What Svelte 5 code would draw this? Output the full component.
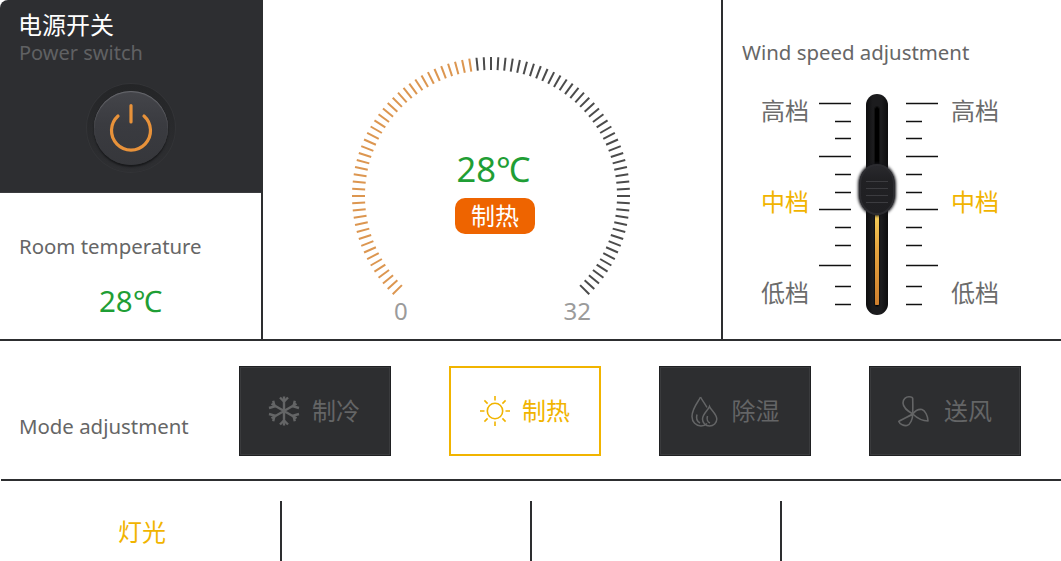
<script lang="ts">
  const cx = 140
  const cy = 140
  const ticks = Array.from({ length: 91 }, (_, i) => {
    const deg = -135 + i * 3
    const rad = (deg * Math.PI) / 180
    return {
      x1: cx + 126 * Math.sin(rad),
      y1: cy - 126 * Math.cos(rad),
      x2: cx + 139 * Math.sin(rad),
      y2: cy - 139 * Math.cos(rad),
      on: deg <= -9
    }
  })

  // y of each scale mark, relative to the top of the slider block
  const marks = [
    { y: 9.5, long: true },
    { y: 27.5, long: false },
    { y: 44.5, long: false },
    { y: 62.5, long: true },
    { y: 80.5, long: false },
    { y: 98.5, long: false },
    { y: 115.5, long: true },
    { y: 133.5, long: false },
    { y: 151.5, long: false },
    { y: 171.5, long: true },
    { y: 192.5, long: false },
    { y: 210.5, long: false }
  ]

  const levels = [
    { label: '高档', active: false },
    { label: '中档', active: true },
    { label: '低档', active: false }
  ]

  const modes = [
    { id: 'cool', label: '制冷' },
    { id: 'heat', label: '制热' },
    { id: 'dry', label: '除湿' },
    { id: 'fan', label: '送风' }
  ]
  const current = 'heat'
</script>

<div class="page">
  <div class="top">
    <div class="left">
      <div class="power">
        <div class="title">电源开关</div>
        <div class="sub">Power switch</div>
        <div class="ring">
          <div class="knob">
            <svg width="44" height="50" viewBox="0 0 44 50" fill="none" aria-hidden="true">
              <path
                d="M9 14A19.5 19.5 0 1 0 35 14M22 3.5V20"
                stroke="#e8923a"
                stroke-width="3.2"
                stroke-linecap="round"
              />
            </svg>
          </div>
        </div>
      </div>
      <div class="room">
        <div class="label">Room temperature</div>
        <div class="room-value">28℃</div>
      </div>
    </div>

    <div class="center">
      <div class="gauge">
        <svg width="280" height="280" viewBox="0 0 280 280" aria-hidden="true">
          {#each ticks as t}
            <line
              x1={t.x1}
              y1={t.y1}
              x2={t.x2}
              y2={t.y2}
              stroke={t.on ? '#dc9650' : '#4b4b4b'}
              stroke-width="2"
            />
          {/each}
        </svg>
        <div class="readout">
          <div class="temp">28℃</div>
          <div class="badge">制热</div>
        </div>
        <div class="ends">
          <span>0</span>
          <span>32</span>
        </div>
      </div>
    </div>

    <div class="right">
      <div class="label">Wind speed adjustment</div>
      <div class="wind">
        <div class="levels">
          {#each levels as l}
            <span class:active={l.active}>{l.label}</span>
          {/each}
        </div>
        <svg class="scale" width="32" height="221" viewBox="0 0 32 221" aria-hidden="true">
          {#each marks as m}
            <line x1={m.long ? 0 : 16} x2="32" y1={m.y} y2={m.y} stroke="#111" stroke-width="1.5" />
          {/each}
        </svg>
        <div class="track">
          <div class="slot"><div class="fill"></div></div>
          <div class="thumb">
            <i></i><i></i><i></i><i></i>
          </div>
        </div>
        <svg class="scale" width="32" height="221" viewBox="0 0 32 221" aria-hidden="true">
          {#each marks as m}
            <line x1="0" x2={m.long ? 32 : 16} y1={m.y} y2={m.y} stroke="#111" stroke-width="1.5" />
          {/each}
        </svg>
        <div class="levels">
          {#each levels as l}
            <span class:active={l.active}>{l.label}</span>
          {/each}
        </div>
      </div>
    </div>
  </div>

  <div class="modes">
    <div class="label mode-label">Mode adjustment</div>
    <div class="mode-list">
      {#each modes as m}
        <div class="mode {m.id}" class:on={m.id === current}>
          {#if m.id === 'cool'}
            <svg width="32" height="30" viewBox="0 0 32 30" fill="none" stroke="currentColor" stroke-width="2.4" aria-hidden="true">
              <path d="M16 0.5V29.5M3.5 7.8 28.5 22.2M3.5 22.2 28.5 7.8" />
              <path d="M12 1.5 16 5.5 20 1.5M12 28.5 16 24.5 20 28.5" />
              <path d="M1 12 6.6 10.4 5.2 4.8M26.8 25.2 25.4 19.6 31 18M1 18 6.6 19.6 5.2 25.2M26.8 4.8 25.4 10.4 31 12" />
            </svg>
          {:else if m.id === 'heat'}
            <svg width="30" height="30" viewBox="0 0 30 30" fill="none" stroke="currentColor" stroke-width="1.6" aria-hidden="true">
              <circle cx="15" cy="15" r="7.7" />
              <path d="M15 0V4.5M15 25.5V30M0 15H4.5M25.5 15H30M4.4 4.4 7.6 7.6M22.4 22.4 25.6 25.6M4.4 25.6 7.6 22.4M22.4 7.6 25.6 4.4" />
            </svg>
          {:else if m.id === 'dry'}
            <svg width="27" height="31" viewBox="0 0 27 31" fill="none" stroke="currentColor" stroke-width="1.5" aria-hidden="true">
              <path d="M9.5 1C8 5 1 12 1 20.5C1 26 5 30 10 30C12.5 30 14.5 29 16 27.5" />
              <path d="M9.5 1C11 4 14 8 16 11.5" />
              <path d="M18.5 10.5C17.5 13.5 11.5 18 11.5 23C11.5 27 14.5 30 18.5 30C22.5 30 25.8 27 25.8 23C25.8 18 19.5 13.5 18.5 10.5Z" />
              <path d="M6 18.5C5 22 6 25.5 9 27M16.5 20C15.5 23 16.5 26 19 27" />
            </svg>
          {:else}
            <svg width="31" height="31" viewBox="0 0 31 31" fill="none" stroke="currentColor" stroke-width="1.6" stroke-linejoin="round" aria-hidden="true">
              <path d="M14.7 18C10 15 5 12 5 7C5 3 8 0.8 11 0.8C13 0.8 14.7 1 14.7 2.5C14.9 8 14.9 13 14.7 18Z" />
              <path d="M14.7 18C17 15 21 13 24 13.5C27 14.5 30 20 30 25C25 25 19 22 14.7 18Z" />
              <path d="M14.7 18C10 21 4 23 0.8 25.5C2 28.5 6 30 9 29.5C12.5 28.5 14.7 23 14.7 18Z" />
            </svg>
          {/if}
          <span>{m.label}</span>
        </div>
      {/each}
    </div>
  </div>

  <div class="lights">
    <div class="light active">灯光</div>
    <div class="light"></div>
    <div class="light"></div>
    <div class="light"></div>
  </div>
</div>

<style>
  :global(body) {
    margin: 0;
    background: #fff;
  }

  .page {
    width: 1061px;
    height: 561px;
    overflow: hidden;
    font-family: 'Noto Sans', 'Noto Sans CJK SC', sans-serif;
    color: #666;
  }

  .top {
    display: flex;
    height: 341px;
    box-sizing: border-box;
    border-bottom: 2px solid #2d2e30;
  }

  .left {
    width: 263px;
    box-sizing: border-box;
    border-right: 2px solid #2d2e30;
  }

  .power {
    height: 193px;
    box-sizing: border-box;
    padding: 8px 19px 0;
    background: #2d2e31;
    border-bottom: 1px solid #3a3b3e;
    border-top-left-radius: 8px;
  }

  .title {
    font-size: 24px;
    line-height: 34px;
    color: #fff;
    margin-left: -1px;
  }

  .sub {
    font-size: 20px;
    line-height: 24px;
    margin-top: -1px;
    color: #606163;
  }

  .ring {
    width: 88px;
    height: 88px;
    margin: 19px auto 0;
    border-radius: 50%;
    background: linear-gradient(#242527, #2e2f32);
    box-shadow: 0 0 0 1px #333437;
    display: flex;
    align-items: center;
    justify-content: center;
  }

  .knob {
    width: 74px;
    height: 74px;
    border-radius: 50%;
    background: linear-gradient(#44454a 0%, #3a3b40 45%, #36373b 100%);
    box-shadow:
      inset 0 1px 1px #6a6b70,
      0 2px 2px #17181a;
    display: flex;
    align-items: center;
    justify-content: center;
  }

  .knob svg {
    margin-bottom: 2px;
  }

  .room {
    padding: 39px 19px 0;
  }

  .label {
    font-size: 20.4px;
    line-height: 28px;
    color: #666;
  }

  .room-value {
    margin-top: 20px;
    padding-left: 80px;
    font-size: 29.5px;
    line-height: 42px;
    color: #1f9e35;
  }

  .center {
    width: 460px;
    box-sizing: border-box;
    border-right: 2px solid #2d2e30;
    padding: 56px 0 0 88px;
  }

  .gauge {
    position: relative;
    width: 280px;
    height: 280px;
  }

  .gauge svg {
    display: block;
  }

  .readout {
    position: absolute;
    left: 7px;
    right: 0;
    top: 88px;
    display: flex;
    flex-direction: column;
    align-items: center;
  }

  .temp {
    font-size: 34.5px;
    line-height: 50px;
    color: #1f9e35;
    margin-left: -2px;
  }

  .badge {
    width: 80px;
    height: 36px;
    margin: 4px 0 0 1px;
    border-radius: 10px;
    background: #ee6400;
    color: #fff;
    font-size: 24px;
    line-height: 36px;
    text-align: center;
  }

  .ends {
    position: absolute;
    left: 43px;
    top: 238px;
    width: 197px;
    display: flex;
    justify-content: space-between;
    font-size: 24px;
    line-height: 34px;
    color: #9b9b9b;
  }

  .right {
    flex: 1;
    padding: 38px 0 0 19px;
  }

  .wind {
    display: flex;
    margin-top: 28px;
    padding-left: 19px;
    height: 221px;
  }

  .levels {
    width: 48px;
    height: 221px;
    display: flex;
    flex-direction: column;
    justify-content: space-between;
    padding: 0 0 5px;
    box-sizing: border-box;
    font-size: 24px;
    line-height: 34px;
    color: #6c6c6c;
  }

  .levels .active {
    color: #f1b400;
  }

  .wind .levels:first-child {
    margin-right: 10px;
  }

  .wind .levels:last-child {
    margin-left: 13px;
  }

  .scale {
    display: block;
    flex: none;
  }

  .track {
    position: relative;
    width: 22px;
    height: 221px;
    margin: 0 18px 0 15px;
    border-radius: 11px;
    background: linear-gradient(90deg, #0d0d0e 0%, #1c1c1e 30%, #1c1c1e 70%, #0d0d0e 100%);
  }

  .slot {
    position: absolute;
    left: 9px;
    top: 13px;
    width: 4px;
    height: 199px;
    background: #000;
    overflow: hidden;
    border-radius: 2px;
    outline: 1px solid #111;
  }

  .fill {
    position: absolute;
    left: 0;
    right: 0;
    top: 104px;
    bottom: 1px;
    background: linear-gradient(#f6d25c 0%, #e6a53f 40%, #cf7f2e 100%);
  }

  .thumb {
    position: absolute;
    left: -7px;
    top: 70px;
    width: 36px;
    height: 51px;
    box-sizing: border-box;
    padding-top: 17px;
    border-radius: 18px / 20px;
    background: linear-gradient(#2a2a2e 0%, #212124 30%, #1f1f22 100%);
    box-shadow:
      0 0 3px 1px #16161a,
      inset 0 0 0 2px #2c2c30;
    display: flex;
    flex-direction: column;
    align-items: center;
    gap: 6px;
  }

  .thumb i {
    display: block;
    width: 22px;
    height: 1px;
    background: #3c3c40;
  }

  .modes {
    display: flex;
    height: 140px;
    box-sizing: border-box;
    border-bottom: 2px solid #2d2e30;
    margin-left: 1px;
    position: relative;
  }

  .mode-label {
    width: 220px;
    padding: 71px 0 0 18px;
    box-sizing: border-box;
    flex: none;
  }

  .mode-list {
    display: flex;
    gap: 58px;
    padding: 25px 0 0 18px;
  }

  .mode {
    width: 152px;
    height: 90px;
    box-sizing: border-box;
    display: flex;
    align-items: center;
    justify-content: center;
    gap: 12px;
    background: #2d2e30;
    border: 1px solid #1f2022;
    box-shadow: inset 0 0 0 1px #3a3b3d;
    color: #646566;
    font-size: 24px;
  }

  .mode span {
    margin-top: -4px;
  }

  .mode.cool {
    padding-right: 2px;
  }

  .mode.dry {
    gap: 14px;
  }

  .mode.fan {
    gap: 15px;
  }

  .mode.on {
    background: #fff;
    border: 2px solid #f1b400;
    box-shadow: none;
    color: #f1b400;
  }

  .lights {
    display: flex;
    padding-top: 20px;
    height: 60px;
  }

  .light {
    width: 250px;
    height: 60px;
    box-sizing: border-box;
    border-right: 2px solid #2d2e30;
    font-size: 24px;
    line-height: 62px;
    text-align: center;
  }

  .light:first-child {
    width: 282px;
    padding-left: 4px;
  }

  .light:last-child {
    border-right: none;
  }

  .light.active {
    color: #f1b400;
  }
</style>
